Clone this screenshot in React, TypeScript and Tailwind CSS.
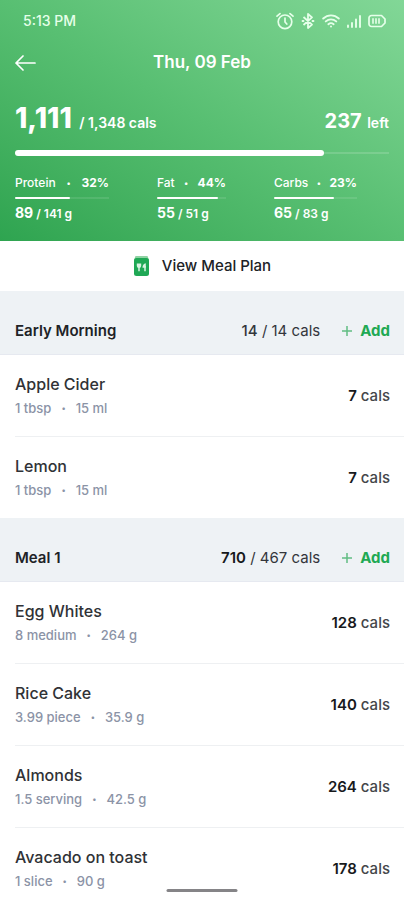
import React from "react";

type Macro = { name: string; percent: number; eaten: number; goal: number; width: string; fill: number };
type Food = { name: string; portion: string; weight: string; cals: number };
type Meal = { name: string; eaten: number; goal: number; strong: boolean; foods: Food[] };

const macros: Macro[] = [
  { name: "Protein", percent: 32, eaten: 89, goal: 141, width: "w-[94px]", fill: 59 },
  { name: "Fat", percent: 44, eaten: 55, goal: 51, width: "w-[69px]", fill: 88 },
  { name: "Carbs", percent: 23, eaten: 65, goal: 83, width: "w-[83px]", fill: 72 },
];

const meals: Meal[] = [
  {
    name: "Early Morning",
    eaten: 14,
    goal: 14,
    strong: false,
    foods: [
      { name: "Apple Cider", portion: "1 tbsp", weight: "15 ml", cals: 7 },
      { name: "Lemon", portion: "1 tbsp", weight: "15 ml", cals: 7 },
    ],
  },
  {
    name: "Meal 1",
    eaten: 710,
    goal: 467,
    strong: true,
    foods: [
      { name: "Egg Whites", portion: "8 medium", weight: "264 g", cals: 128 },
      { name: "Rice Cake", portion: "3.99 piece", weight: "35.9 g", cals: 140 },
      { name: "Almonds", portion: "1.5 serving", weight: "42.5 g", cals: 264 },
      { name: "Avacado on toast", portion: "1 slice", weight: "90 g", cals: 178 },
    ],
  },
];

function StatusIcons() {
  return (
    <div className="flex items-center gap-[7px] text-[#e6ffea]">
      <svg width="18" height="18" viewBox="0 0 18 18" fill="none" stroke="currentColor" strokeWidth="1.7" strokeLinecap="round" aria-hidden="true">
        <circle cx="9" cy="9.8" r="6.8" />
        <path d="M9 6v4l1.8 2M1 4.2 4 1.6M17 4.2 14 1.6" />
      </svg>
      <svg width="14" height="18" viewBox="0 0 14 18" fill="none" stroke="currentColor" strokeWidth="1.8" strokeLinejoin="round" aria-hidden="true">
        <path d="m2.5 5 8.5 7.6L7 16V2l4 3.4L2.5 13" />
        <path d="M1.5 9h1M11.5 9h1" strokeLinecap="round" />
      </svg>
      <svg width="18" height="14" viewBox="0 0 18 14" fill="none" stroke="currentColor" strokeWidth="1.9" strokeLinecap="round" aria-hidden="true">
        <path d="M1.2 4.5C5.8.3 12.2.3 16.8 4.5M3.8 7.4c3-2.7 7.4-2.7 10.4 0M6.4 10.2c1.6-1.3 3.6-1.3 5.2 0" />
        <circle cx="9" cy="12.4" r="1" fill="currentColor" stroke="none" />
      </svg>
      <svg width="14" height="14" viewBox="0 0 14 14" fill="none" stroke="currentColor" strokeWidth="1.9" strokeLinecap="round" aria-hidden="true">
        <path d="M1 11.5V13M5 9v4M9 5.5V13M13 2v11" />
      </svg>
      <svg width="18" height="14" viewBox="0 0 18 14" fill="none" stroke="currentColor" strokeLinejoin="round" aria-hidden="true">
        <path d="M3.5 1.5h10L17 5v4l-3.5 3.5h-10A2.5 2.5 0 0 1 1 10V4a2.5 2.5 0 0 1 2.5-2.5Z" strokeWidth="1.7" />
        <path d="M5 4.3v5.4M8 4.3v5.4M11 4.3v5.4" strokeWidth="1.6" />
      </svg>
    </div>
  );
}

function MacroStat({ macro }: { macro: Macro }) {
  return (
    <div className={macro.width}>
      <div className="flex justify-between text-xs leading-4 font-medium whitespace-nowrap">
        <span>{macro.name}</span>
        <span className="text-[8px]">•</span>
        <span className="font-bold">{macro.percent}%</span>
      </div>
      <div className="my-1.5 flex h-0.5 items-center bg-white/10">
        <div className="h-0.5 rounded-full bg-white" style={{ width: `${macro.fill}%` }} />
      </div>
      <p className="text-xs leading-4 font-semibold whitespace-nowrap">
        <strong className="text-sm leading-4 font-bold">{macro.eaten}</strong> / {macro.goal} g
      </p>
    </div>
  );
}

function FoodRow({ food }: { food: Food }) {
  return (
    <li className="ml-[15px] flex h-[82px] items-center justify-between border-b border-[#eef0f2] pr-[14px] last:h-[81px] last:border-b-0">
      <div>
        <p className="text-base leading-6 font-medium text-[#303236]">{food.name}</p>
        <p className="flex gap-2.5 text-[13px] leading-6 font-medium text-[#8b93a6]">
          <span>{food.portion}</span>
          <span className="text-[8px]">•</span>
          <span>{food.weight}</span>
        </p>
      </div>
      <p className="text-[15px] leading-6 font-medium text-[#44464a]">
        <strong className="font-semibold text-[#17191c]">{food.cals}</strong> cals
      </p>
    </li>
  );
}

function MealSection({ meal }: { meal: Meal }) {
  return (
    <section>
      <header className="flex h-16 items-center border-b border-[#e6e9f0] bg-[#eef2f5] pt-4 pr-[14px] pl-[15px] text-[15px] leading-6">
        <h2 className="flex-1 font-semibold text-[#202226]">{meal.name}</h2>
        <p className="text-[#33363b]">
          <span className={meal.strong ? "font-semibold text-[#17191c]" : "font-medium"}>{meal.eaten}</span> / {meal.goal} cals
        </p>
        <button type="button" className="ml-[22px] flex items-center gap-2 font-bold text-[#20a953]">
          <svg width="10" height="10" viewBox="0 0 10 10" stroke="#62bd83" strokeWidth="1.5" aria-hidden="true">
            <path d="M5 0v10M0 5h10" />
          </svg>
          Add
        </button>
      </header>
      <ul>
        {meal.foods.map((food) => (
          <FoodRow key={food.name} food={food} />
        ))}
      </ul>
    </section>
  );
}

export default function App() {
  return (
    <div className="relative flex h-dvh flex-col overflow-hidden bg-white font-['Inter','Liberation_Sans',sans-serif]">
      <header className="shrink-0 bg-linear-to-tr from-[#2ea450] via-[#58bf72] to-[#82d797] pb-[19px] text-white">
        <div className="flex h-[42px] items-center justify-between pr-[18px] pl-[23px]">
          <span className="text-sm font-medium text-[#e6ffea]">5:13 PM</span>
          <StatusIcons />
        </div>
        <div className="grid h-[42px] grid-cols-[1fr_auto_1fr] items-center px-[15px]">
          <button type="button" aria-label="Back" className="justify-self-start">
            <svg width="21" height="16" viewBox="0 0 21 16" fill="none" stroke="currentColor" strokeWidth="1.7" strokeLinecap="round" strokeLinejoin="round" aria-hidden="true">
              <path d="M20 8H1M8 1 1 8l7 7" />
            </svg>
          </button>
          <h1 className="text-[17px] font-semibold">Thu, 09 Feb</h1>
        </div>
        <div className="px-[15px] pt-4">
          <div className="flex items-baseline justify-between leading-9">
            <p className="text-sm leading-9 font-semibold">
              <strong className="mr-1 text-[28px] font-extrabold">1,111</strong> / 1,348 cals
            </p>
            <p className="text-sm leading-9 font-semibold">
              <strong className="mr-0.5 text-xl leading-9 font-bold">237</strong> left
            </p>
          </div>
          <div className="mt-[9px] flex h-1.5 items-center">
            <div className="h-1.5 rounded-full bg-white" style={{ width: "82.6%" }} />
            <div className="h-0.5 flex-1 bg-white/15" />
          </div>
          <div className="mt-[19px] flex gap-12">
            {macros.map((macro) => (
              <MacroStat key={macro.name} macro={macro} />
            ))}
          </div>
        </div>
      </header>
      <button type="button" className="flex h-[50px] w-full shrink-0 items-center justify-center gap-3 text-[15px] font-medium text-[#202226]">
        <svg width="17" height="20" viewBox="0 0 17 20" aria-hidden="true">
          <path d="M2.5 0h12l1.5 4H1Z" fill="#8fd3a3" />
          <rect x="1" y="2" width="15" height="18" rx="2.5" fill="#1fa855" />
          <path d="M3.8 7.5h4.4v2.2a2.2 2.2 0 0 1-4.4 0ZM9.5 11.8c0-2.5 1-4.3 3.3-4.6v4.6Z" fill="#d9f3e2" />
          <path d="M6 8v7.3M12 10v5.3" fill="none" stroke="#d9f3e2" strokeWidth="1.5" />
        </svg>
        View Meal Plan
      </button>
      <main className="min-h-0 flex-1 overflow-y-auto [scrollbar-width:none]">
        {meals.map((meal) => (
          <MealSection key={meal.name} meal={meal} />
        ))}
      </main>
      <div className="absolute bottom-2 left-1/2 h-[3px] w-[71px] -translate-x-1/2 rounded-full bg-[#858487]" />
    </div>
  );
}
